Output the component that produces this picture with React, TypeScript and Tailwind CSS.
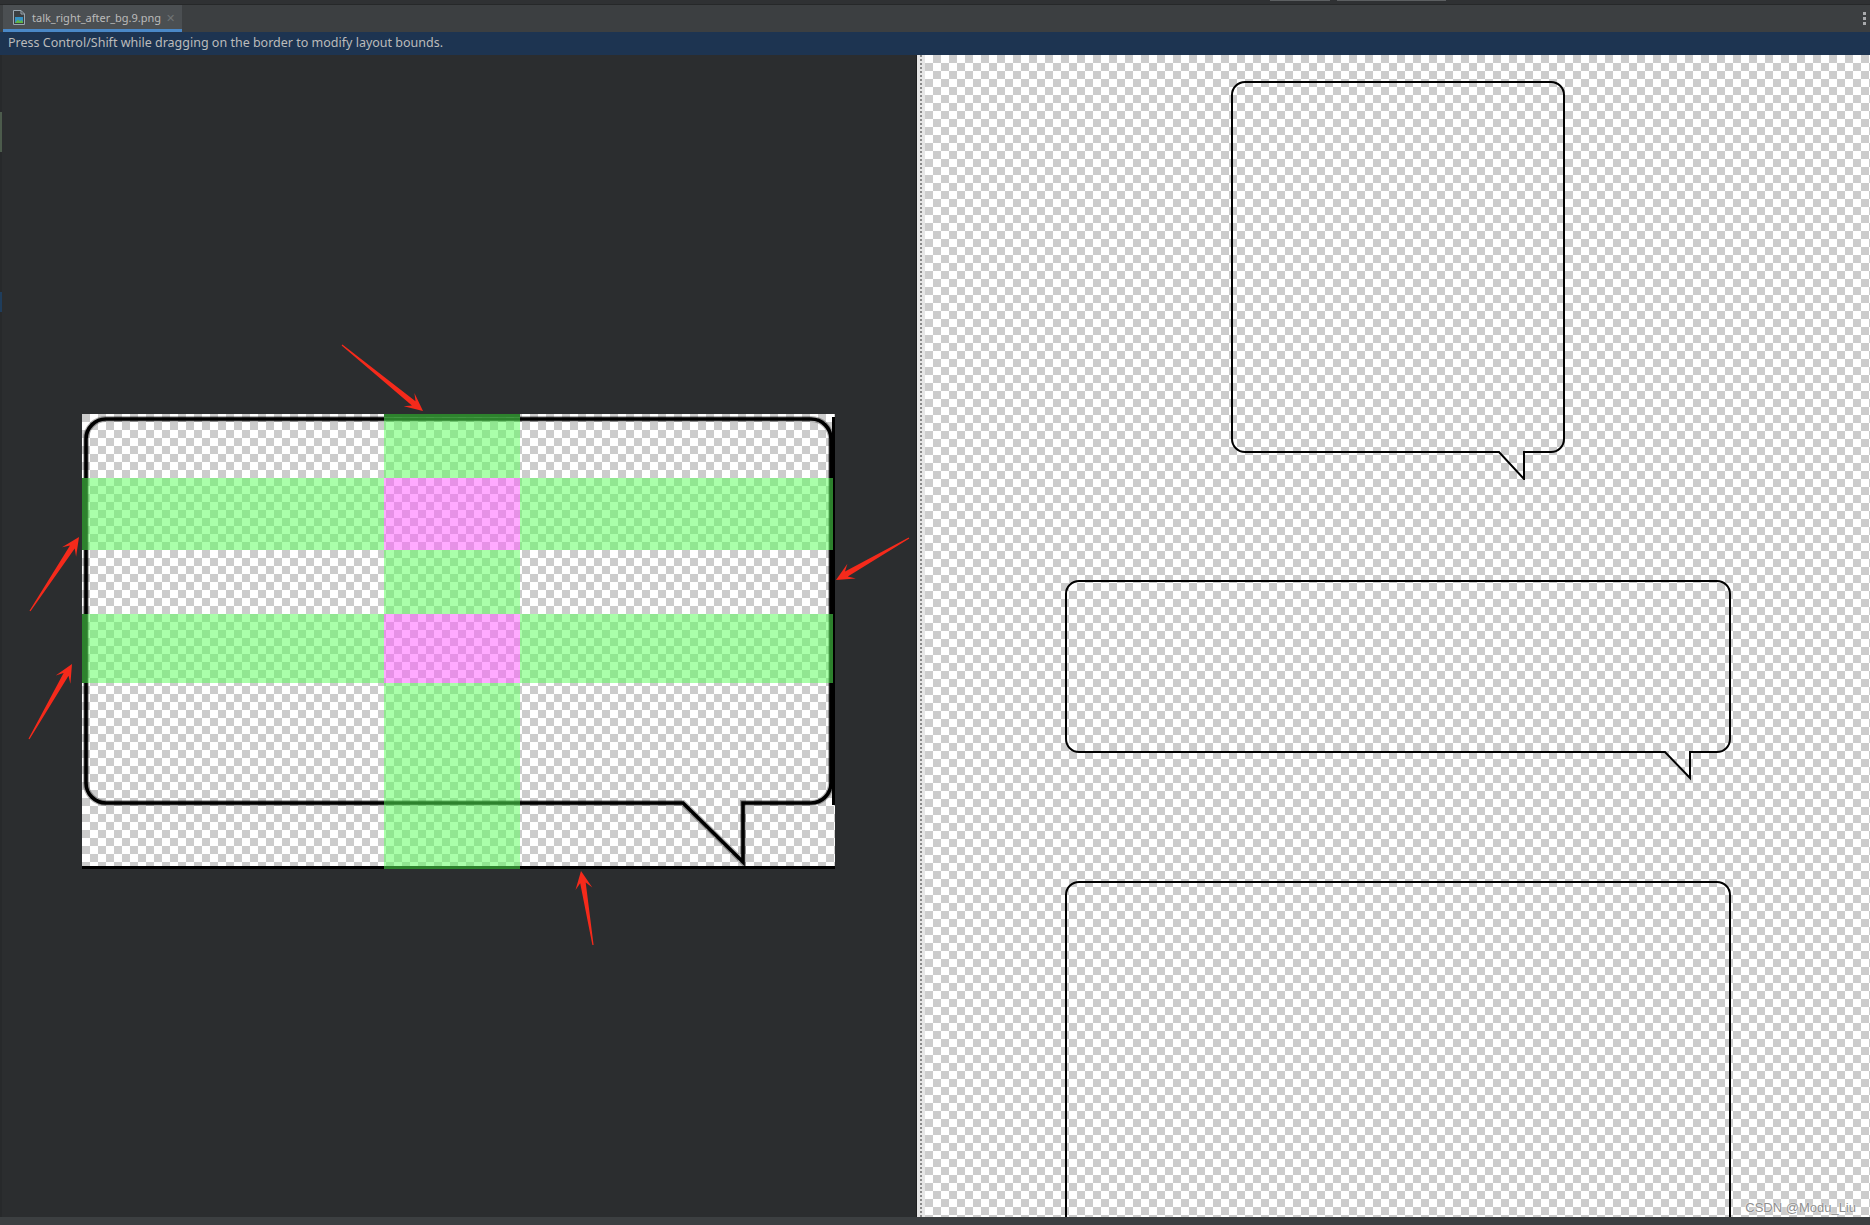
import React from "react"

type Arrow = { tx: number; ty: number; px: number; py: number }

// red annotation arrows, coordinates relative to the left pane
const arrows: Arrow[] = [
    { tx: 342, ty: 290, px: 423, py: 356 },
    { tx: 30, ty: 556, px: 79, py: 482 },
    { tx: 29, ty: 684, px: 72, py: 609 },
    { tx: 909, ty: 483, px: 836, py: 525 },
    { tx: 593, ty: 890, px: 581, py: 816 },
]

function arrowPoints({ tx, ty, px, py }: Arrow) {
    const dx = px - tx
    const dy = py - ty
    const len = Math.hypot(dx, dy)
    const ux = dx / len
    const uy = dy / len
    const nx = -uy
    const ny = ux
    const head = 18
    const join = 12
    const hw = 8.5
    const sw0 = 0.6
    const sw1 = 2.8
    const jx = px - ux * join
    const jy = py - uy * join
    const hx = px - ux * head
    const hy = py - uy * head
    const pts = [
        [tx + nx * sw0, ty + ny * sw0],
        [jx + nx * sw1, jy + ny * sw1],
        [hx + nx * hw, hy + ny * hw],
        [px, py],
        [hx - nx * hw, hy - ny * hw],
        [jx - nx * sw1, jy - ny * sw1],
        [tx - nx * sw0, ty - ny * sw0],
    ]
    return pts.map(([x, y]) => `${x.toFixed(1)},${y.toFixed(1)}`).join(" ")
}

function Checker({ id, a, b }: { id: string; a: string; b: string }) {
    return (
        <pattern id={id} width="16" height="16" patternUnits="userSpaceOnUse">
            <rect width="16" height="16" fill={a} />
            <rect width="8" height="8" fill={b} />
            <rect x="8" y="8" width="8" height="8" fill={b} />
        </pattern>
    )
}

function NinePatchPreview() {
    const green = "rgba(88,255,88,0.51)"
    const pink = "rgba(255,88,255,0.51)"
    const bubble =
        "M24,5 H729 A20,20 0 0 1 749,25 V369 A20,20 0 0 1 729,389 H661 V448 L601,389 H24 A20,20 0 0 1 4,369 V25 A20,20 0 0 1 24,5 Z"
    return (
        <svg width="753" height="455" viewBox="0 0 753 455" className="block">
            <defs>
                <Checker id="chk" a="#ffffff" b="#cccccc" />
            </defs>
            <rect width="753" height="455" fill="url(#chk)" />
            {/* bubble body */}
            <path d={bubble} fill="none" stroke="#000" strokeOpacity="0.3" strokeWidth="6" />
            <path d={bubble} fill="none" stroke="#000" strokeWidth="3.6" strokeLinejoin="miter" />
            {/* 9-patch markers */}
            <rect x="302" y="0" width="136" height="3" fill="#000" />
            <rect x="0" y="64" width="3" height="72" fill="#000" />
            <rect x="0" y="200" width="3" height="69" fill="#000" />
            <rect x="750" y="3" width="3" height="388" fill="#000" />
            <rect x="0" y="452" width="753" height="3" fill="#000" />
            {/* stretch areas */}
            <rect x="302" y="0" width="136" height="64" fill={green} />
            <rect x="302" y="136" width="136" height="64" fill={green} />
            <rect x="302" y="269" width="136" height="186" fill={green} />
            <rect x="0" y="64" width="302" height="72" fill={green} />
            <rect x="438" y="64" width="313" height="72" fill={green} />
            <rect x="0" y="200" width="302" height="69" fill={green} />
            <rect x="438" y="200" width="313" height="69" fill={green} />
            <rect x="302" y="64" width="136" height="72" fill={pink} />
            <rect x="302" y="200" width="136" height="69" fill={pink} />
        </svg>
    )
}

function TabIcon() {
    return (
        <svg width="12" height="15" viewBox="0 0 12 15" className="shrink-0">
            <path d="M0.5,0.5 H8 L11.5,4 V14.5 H0.5 Z" fill="#3c3f41" stroke="#9aa7b0" />
            <path d="M8,0.5 V4 H11.5" fill="none" stroke="#9aa7b0" />
            <rect x="2" y="7" width="8" height="6" fill="#3592c4" />
            <path d="M2,13 L5,9.5 L7,11.5 L8.5,10 L10,12 V13 Z" fill="#62b543" />
        </svg>
    )
}

export default function App() {
    return (
        <div className="w-[1870px] h-[1225px] flex flex-col overflow-hidden bg-[#2b2d2f] font-['Noto_Sans',sans-serif]">
            {/* window strip */}
            <div className="h-[5px] flex border-b border-[#262829] bg-[#2f3133]">
                <div className="ml-[1270px] w-[60px] h-[1px] bg-[#5c5f61]" />
                <div className="ml-[7px] w-[109px] h-[1px] bg-[#5c5f61]" />
            </div>

            {/* editor tabs */}
            <div className="h-[27px] flex items-stretch bg-[#3c3f41] pl-[3px] pr-[3px]">
                <div className="w-[179px] flex items-center pl-[10px] bg-[#4b4f52] border-b-[3px] border-[#4a88c7]">
                    <TabIcon />
                    <span className="ml-[7px] text-[11px] text-[#bbbbbb] leading-none whitespace-nowrap">
                        talk_right_after_bg.9.png
                    </span>
                    <span className="ml-auto mr-[7px] text-[11px] text-[#6f7375] leading-none">✕</span>
                </div>
                <div className="ml-auto flex flex-col justify-center gap-[2px] pr-[1px]">
                    <div className="w-[3px] h-[3px] bg-[#a9abad]" />
                    <div className="w-[3px] h-[3px] bg-[#a9abad]" />
                    <div className="w-[3px] h-[3px] bg-[#a9abad]" />
                </div>
            </div>

            {/* hint bar */}
            <div className="h-[23px] flex items-center pl-[8px] bg-[#1d3451]">
                <span className="text-[12.5px] text-[#bbbbbb] leading-none">
                    Press Control/Shift while dragging on the border to modify layout bounds.
                </span>
            </div>

            <div className="flex-1 flex min-h-0">
                {/* 9-patch source pane */}
                <div className="w-[916px] relative flex">
                    <div className="w-[2px] flex flex-col bg-[#27292b]">
                        <div className="mt-[57px] h-[40px] bg-[#4c5b4c]" />
                        <div className="mt-[140px] h-[20px] bg-[#1f3d5c]" />
                    </div>
                    <div className="pl-[80px] pt-[359px]">
                        <NinePatchPreview />
                    </div>
                    <svg className="absolute inset-0 pointer-events-none" width="916" height="1162">
                        {arrows.map((a, i) => (
                            <polygon key={i} points={arrowPoints(a)} fill="#f52a1b" />
                        ))}
                    </svg>
                </div>

                {/* splitter */}
                <div className="w-[9px] flex bg-[#e6e6e6] border-l border-[#1f2021]">
                    <div className="ml-[3px] w-[2px] border-l-2 border-dotted border-[#8a8a8a]" />
                </div>

                {/* stretched previews */}
                <div className="flex-1 relative overflow-hidden flex flex-col items-center pt-[25px] bg-[conic-gradient(#cccccc_25%,#ffffff_0_50%,#cccccc_0_75%,#ffffff_0)] bg-size-[16px_16px]">
                    <svg width="336" height="400" viewBox="0 0 336 400" className="shrink-0">
                        <path
                            d="M15,2 H321 A13,13 0 0 1 334,15 V359 A13,13 0 0 1 321,372 H294 V399 L269,372 H15 A13,13 0 0 1 2,359 V15 A13,13 0 0 1 15,2 Z"
                            fill="none"
                            stroke="#000"
                            strokeWidth="2"
                        />
                    </svg>
                    <svg width="668" height="202" viewBox="0 0 668 202" className="shrink-0 mt-[99px]">
                        <path
                            d="M15,2 H653 A13,13 0 0 1 666,15 V160 A13,13 0 0 1 653,173 H626 V199 L601,173 H15 A13,13 0 0 1 2,160 V15 A13,13 0 0 1 15,2 Z"
                            fill="none"
                            stroke="#000"
                            strokeWidth="2"
                        />
                    </svg>
                    <svg width="668" height="340" viewBox="0 0 668 340" className="shrink-0 mt-[99px]">
                        <path
                            d="M2,360 V15 A13,13 0 0 1 15,2 H653 A13,13 0 0 1 666,15 V360"
                            fill="none"
                            stroke="#000"
                            strokeWidth="2"
                        />
                    </svg>
                    <span className="absolute right-[14px] bottom-[3px] text-[13px] leading-none text-[#8e8e8e] font-['Liberation_Sans',sans-serif] [text-shadow:0_0_2px_#ffffff,0_0_1px_#ffffff]">
                        CSDN @Modu_Liu
                    </span>
                </div>
            </div>

            <div className="h-[8px] bg-[#3c3f41]" />
        </div>
    )
}
